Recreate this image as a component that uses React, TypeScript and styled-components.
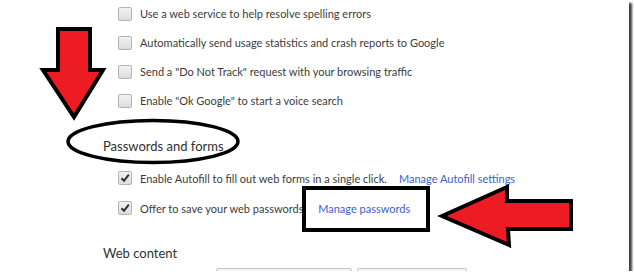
import styled, { createGlobalStyle } from "styled-components";

const GlobalStyle = createGlobalStyle`
  html, body {
    margin: 0;
    padding: 0;
    background: #ffffff;
  }
  body {
    font-family: Lato, "Open Sans", sans-serif;
  }
`;

const Frame = styled.div`
  position: relative;
  width: 629px;
  height: 271px;
  overflow: hidden;
  background: #ffffff;
  box-shadow: 3px 3px 2px rgba(0, 0, 0, 0.75);
`;

const Content = styled.div`
  padding-left: 103px;
  display: flex;
  flex-direction: column;
`;

const List = styled.div<{ $top?: number }>`
  display: flex;
  flex-direction: column;
  margin-left: 15px;
  margin-top: ${(p) => p.$top ?? 0}px;
`;

const Row = styled.label<{ $h: number }>`
  height: ${(p) => p.$h}px;
  display: flex;
  align-items: center;
  gap: 8px;
  font-size: 11px;
  color: #3c3c3c;
  white-space: nowrap;
`;

const Box = styled.span`
  width: 12px;
  height: 12px;
  flex: none;
  border: 1px solid #b4b4b4;
  border-radius: 2px;
  background: linear-gradient(#f2f2f2, #dcdcdc);
  display: flex;
  align-items: center;
  justify-content: center;
`;

const Link = styled.span`
  color: #3b5fd1;
  margin-left: 4px;
`;

const Heading = styled.div<{ $h: number; $top: number }>`
  height: ${(p) => p.$h}px;
  margin-top: ${(p) => p.$top}px;
  display: flex;
  align-items: center;
  font-size: 13px;
  color: #303030;
`;

const Buttons = styled.div`
  display: flex;
  gap: 5px;
  margin-left: 113px;
  margin-top: 0;
`;

const Button = styled.div<{ $w: number }>`
  width: ${(p) => p.$w}px;
  height: 24px;
  border: 1px solid #c4c4c4;
  border-radius: 2px;
  background: #f4f4f4;
`;

const Overlay = styled.svg`
  position: absolute;
  left: 0;
  top: 0;
  pointer-events: none;
`;

function Check({ checked }: { checked?: boolean }) {
  return (
    <Box>
      {checked && (
        <svg width="10" height="10" viewBox="0 0 10 10">
          <path d="M1.5 5.2 L4 7.8 L8.8 1.6" fill="none" stroke="#2e2e2e" strokeWidth="2" />
        </svg>
      )}
    </Box>
  );
}

export default function App() {
  return (
    <>
      <GlobalStyle />
      <Frame>
        <Content>
          <List $top={-1}>
            <Row $h={29}>
              <Check />
              Use a web service to help resolve spelling errors
            </Row>
            <Row $h={29}>
              <Check />
              Automatically send usage statistics and crash reports to Google
            </Row>
            <Row $h={29}>
              <Check />
              Send a "Do Not Track" request with your browsing traffic
            </Row>
            <Row $h={29}>
              <Check />
              Enable "Ok Google" to start a voice search
            </Row>
          </List>
          <Heading $h={34} $top={14}>
            Passwords and forms
          </Heading>
          <List>
            <Row $h={30}>
              <Check checked />
              Enable Autofill to fill out web forms in a single click.
              <Link>Manage Autofill settings</Link>
            </Row>
            <Row $h={30}>
              <Check checked />
              Offer to save your web passwords.
              <Link>Manage passwords</Link>
            </Row>
          </List>
          <Heading $h={30} $top={15}>
            Web content
          </Heading>
          <Buttons>
            <Button $w={134} />
            <Button $w={108} />
          </Buttons>
        </Content>
        <Overlay width="629" height="271" viewBox="0 0 629 271">
          <polygon
            points="58,29 90,29 90,70 103,70 74,117 43,70 58,70"
            fill="#ed1c24"
            stroke="#000"
            strokeWidth="4"
            strokeLinejoin="miter"
          />
          <ellipse cx="153" cy="141.5" rx="85" ry="21" fill="none" stroke="#000" strokeWidth="3.5" />
          <rect x="304" y="188" width="124" height="42" fill="none" stroke="#000" strokeWidth="4" />
          <polygon
            points="442,216 507,187 507,201 571,201 571,229 508,229 509,245"
            fill="#ed1c24"
            stroke="#000"
            strokeWidth="4"
            strokeLinejoin="miter"
          />
        </Overlay>
      </Frame>
    </>
  );
}
